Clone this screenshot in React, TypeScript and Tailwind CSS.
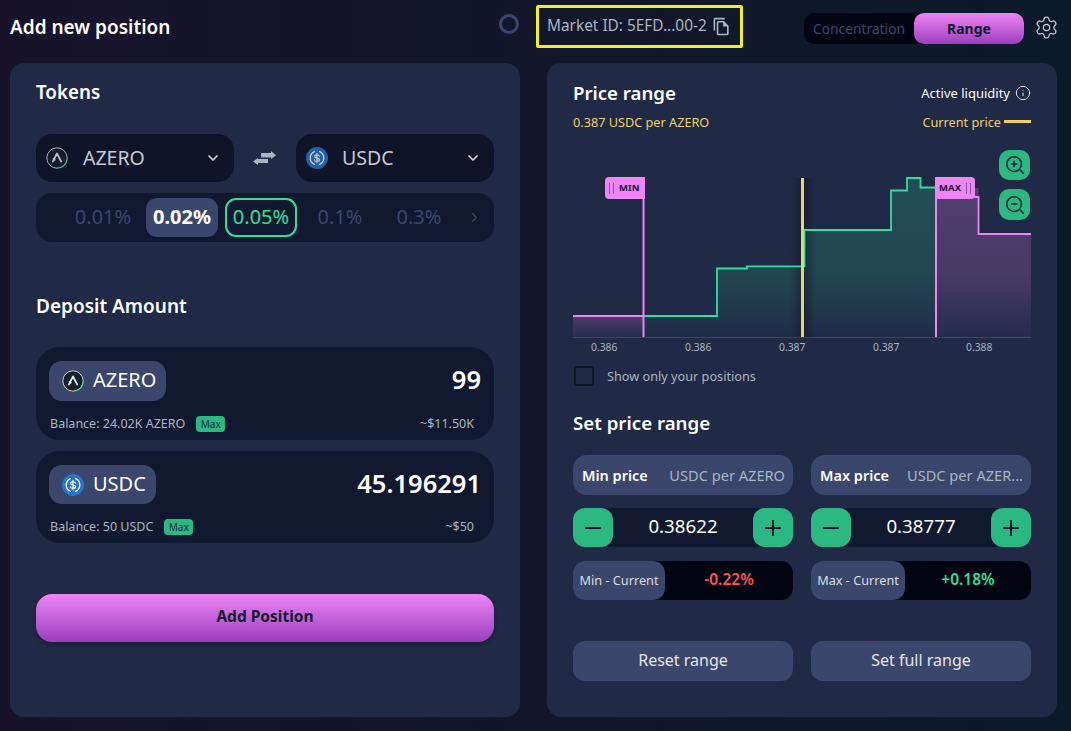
import React from 'react';
import { ChevronDown, ChevronRight, Info, Minus, Plus, Settings, ZoomIn, ZoomOut } from 'lucide-react';
import { MdOutlineFileCopy } from 'react-icons/md';

const FONT = "font-['Noto_Sans',sans-serif]";

function AzeroIcon({ size = 22 }: { size?: number }) {
  return (
    <svg width={size} height={size} viewBox="0 0 22 22" fill="none">
      <circle cx="11" cy="11" r="10.5" fill="#16202b" />
      <circle cx="11" cy="11" r="10.2" stroke="#cfd3d8" strokeWidth="1" />
      <path d="M14 20.8A10.2 10.2 0 0 0 21 12.5" stroke="#2ee09a" strokeWidth="1.2" />
      <path d="M11 6.500 6.800 14.500M11 6.500l4.200 8M8.800 12.800l-1.200-1" stroke="#e8eaec" strokeWidth="1.700" strokeLinecap="round" />
    </svg>
  );
}

function UsdcIcon({ size = 22 }: { size?: number }) {
  return (
    <svg width={size} height={size} viewBox="0 0 22 22" fill="none">
      <circle cx="11" cy="11" r="11" fill="#2775ca" />
      <path d="M8.400 4.600a7 7 0 0 0 0 12.800M13.600 4.600a7 7 0 0 1 0 12.800" stroke="#fff" strokeWidth="1.300" strokeLinecap="round" />
      <path d="M13.400 9.200c-.3-1-1.200-1.500-2.400-1.500-1.300 0-2.300.7-2.300 1.700 0 2.400 4.800 1 4.800 3.300 0 1-1 1.700-2.500 1.700-1.300 0-2.300-.6-2.600-1.600M11 6.300v9.400" stroke="#fff" strokeWidth="1.100" strokeLinecap="round" />
    </svg>
  );
}

function SwapIcon() {
  return (
    <svg width="24" height="16" viewBox="0 0 24 16" fill="#a9b6bf">
      <path d="M8 3h10V1l5 4.300L18 9V7.500H8z" />
      <path d="M15 9H5V8l-5 3.500L5 15v-2h10z" />
    </svg>
  );
}

function TokenSelect({ icon, name, textGap }: { icon: React.ReactNode; name: string; textGap: string }) {
  return (
    <div className="flex h-12 w-[198px] items-center rounded-[16px] bg-[#0f1429] pl-[10px] pr-[13px]">
      <span className="opacity-80">{icon}</span>
      <span className={`text-[19.5px] leading-none text-[#c4cad0] ${textGap}`}>{name}</span>
      <ChevronDown size={16} strokeWidth={2.500} className="ml-auto text-[#d5d9dd]" />
    </div>
  );
}

function FeeTier({ label, state }: { label: string; state?: 'active' | 'best' }) {
  const tone =
    state === 'active'
      ? 'bg-[#3a466b] font-bold text-white'
      : state === 'best'
        ? 'border-2 border-[#2ee09a] text-[#2ee09a]'
        : 'text-[#3a466b]';
  return (
    <div className={`flex h-[39px] w-[72px] items-center justify-center rounded-[11px] pb-[2px] text-[20px] ${tone}`}>
      {label}
    </div>
  );
}

type DepositProps = {
  icon: React.ReactNode;
  token: string;
  pillSize: string;
  amount: string;
  balance: string;
  usd: string;
  height: string;
};

function DepositCard({ icon, token, pillSize, amount, balance, usd, height }: DepositProps) {
  return (
    <div className={`flex flex-col rounded-[24px] bg-[#111931] px-[13px] pt-[14px] ${height}`}>
      <div className="flex items-center justify-between">
        <div className={`flex items-center rounded-[13px] bg-[#3a466b] pl-[13px] ${pillSize}`}>
          {icon}
          <span className="ml-[9px] pb-[2px] text-[20px] leading-none text-white">{token}</span>
        </div>
        <span className="pb-[2px] text-[25.5px] font-semibold leading-none text-white">{amount}</span>
      </div>
      <div className="mt-[15px] flex items-center pr-[7px]">
        <span className="ml-px text-[12.5px] leading-4 text-[#a9b6bf]">{balance}</span>
        <span className="ml-[11px] flex h-4 w-[29px] items-center justify-center rounded-[4px] bg-[#2bb883] text-[10px] font-medium leading-none text-[#0f3a4a]">
          Max
        </span>
        <span className="ml-auto text-[12.5px] leading-4 text-[#a9b6bf]">{usd}</span>
      </div>
    </div>
  );
}

function StepButton({ children }: { children: React.ReactNode }) {
  return (
    <button className="flex h-[39px] w-[40px] items-center justify-center rounded-[12px] bg-[#2bb883] text-[#0f1429]">
      {children}
    </button>
  );
}

type RangeColumnProps = {
  label: string;
  unit: string;
  value: string;
  diffLabel: string;
  diffWidth: string;
  diff: string;
  diffColor: string;
  action: string;
};

function RangeColumn({ label, unit, value, diffLabel, diffWidth, diff, diffColor, action }: RangeColumnProps) {
  return (
    <div className="flex flex-col">
      <div className="flex h-10 items-center justify-between rounded-[14px] bg-[#3a466b] pl-[9px] pr-[8px]">
        <span className="shrink-0 pb-px text-[14.5px] font-semibold leading-5 text-white">{label}</span>
        <span className="whitespace-nowrap pb-px text-[14.6px] leading-5 text-[#a9b6bf]">{unit}</span>
      </div>
      <div className="mt-[13px] flex h-[39px] items-center justify-between rounded-[12px] bg-[#111931]">
        <StepButton>
          <Minus size={24} strokeWidth={2} />
        </StepButton>
        <span className="pb-[2px] text-[18.7px] leading-none text-white">{value}</span>
        <StepButton>
          <Plus size={24} strokeWidth={2} />
        </StepButton>
      </div>
      <div className="mt-[14px] flex h-[39px] items-center rounded-[12px] bg-[#020412]">
        <div className={`flex h-full items-center justify-center rounded-[12px] bg-[#3a466b] text-[12.7px] leading-none text-[#d8dde1] ${diffWidth}`}>
          {diffLabel}
        </div>
        <span className={`flex-1 pb-px text-center text-[15.5px] font-semibold leading-none ${diffColor}`}>{diff}</span>
      </div>
      <button className="mt-[41px] h-10 rounded-[12px] bg-[#3a466b] pb-[2px] text-[16px] leading-none text-[#e4e7ea]">
        {action}
      </button>
    </div>
  );
}

function LiquidityChart() {
  const ticks = ['0.386', '0.386', '0.387', '0.387', '0.388'];
  return (
    <div className="relative mt-[46px]">
      <svg width="458" height="161" viewBox="0 0 458 161" className="block">
        <defs>
          <linearGradient id="greenFill" x1="0" y1="0" x2="0" y2="1">
            <stop offset="0" stopColor="#2ee09a" stopOpacity="0.2" />
            <stop offset="0.6" stopColor="#2ee09a" stopOpacity="0.16" />
            <stop offset="1" stopColor="#2ee09a" stopOpacity="0.02" />
          </linearGradient>
          <linearGradient id="pinkFill" x1="0" y1="0" x2="0" y2="1">
            <stop offset="0" stopColor="#ef84f5" stopOpacity="0.24" />
            <stop offset="0.6" stopColor="#ef84f5" stopOpacity="0.18" />
            <stop offset="1" stopColor="#ef84f5" stopOpacity="0.03" />
          </linearGradient>
          <linearGradient id="pinkFillLow" x1="0" y1="0" x2="0" y2="1">
            <stop offset="0" stopColor="#ef84f5" stopOpacity="0.22" />
            <stop offset="1" stopColor="#ef84f5" stopOpacity="0.03" />
          </linearGradient>
          <linearGradient id="priceShade" x1="0" y1="0" x2="1" y2="0">
            <stop offset="0" stopColor="#0f1429" stopOpacity="0" />
            <stop offset="0.5" stopColor="#0f1429" stopOpacity="0.55" />
            <stop offset="1" stopColor="#0f1429" stopOpacity="0" />
          </linearGradient>
        </defs>
        {/* area under the liquidity steps */}
        <path d="M0 139H70V160H0Z" fill="url(#pinkFillLow)" />
        <path
          d="M70 139H144V91.500H174V89.300H231.500V53H318V13.500H334V1H347.500V10.500H363V160H70Z"
          fill="url(#greenFill)"
        />
        <path d="M363 11H405.500V57H458V160H363Z" fill="url(#pinkFill)" />
        <rect x="217" y="1" width="26" height="159" fill="url(#priceShade)" />
        <path
          d="M70 139H144V91.500H174V89.300H231.500V53H318V13.500H334V1H347.500V10.500H364"
          fill="none"
          stroke="#2ee09a"
          strokeWidth="1.800"
        />
        <path d="M0 139H70" fill="none" stroke="#ef84f5" strokeWidth="1.800" />
        <path d="M363 20H405.500V57H458" fill="none" stroke="#ef84f5" strokeWidth="1.800" />
        <path d="M0 160.500H458" stroke="#3a466b" strokeWidth="1" />
        <path d="M70.500 1V160M363 1V160" stroke="#ef84f5" strokeWidth="2" />
        <rect x="228" y="1" width="3" height="159" fill="#efd063" />
      </svg>
      <div className="absolute left-[32px] top-0 flex h-[22px] w-[40px] items-center gap-[5px] rounded-l-[4px] bg-[#ef84f5] pl-[4px] text-[9.5px] font-bold leading-none text-[#1a1638]">
        <span className="h-[11px] w-[5px] border-x-[1.5px] border-[#8a5a9e]" />
        MIN
      </div>
      <div className="absolute left-[362px] top-0 flex h-[22px] w-[40px] items-center justify-end gap-[5px] rounded-r-[4px] bg-[#ef84f5] pr-[4px] text-[9.5px] font-bold leading-none text-[#1a1638]">
        MAX
        <span className="h-[11px] w-[5px] border-x-[1.5px] border-[#8a5a9e]" />
      </div>
      <div className="absolute right-px top-[-27px] flex flex-col gap-[9px]">
        <button className="flex h-[30px] w-[31px] items-center justify-center rounded-[10px] bg-[#2bb883] text-[#10283a]">
          <ZoomIn size={22} strokeWidth={1.700} />
        </button>
        <button className="flex h-[31px] w-[31px] items-center justify-center rounded-[10px] bg-[#2bb883] text-[#10283a]">
          <ZoomOut size={22} strokeWidth={1.700} />
        </button>
      </div>
      <div className="relative h-[18px] text-[10.3px] leading-[18px] text-[#a9b6bf]">
        <span className="absolute left-[18px]">{ticks[0]}</span>
        <span className="absolute left-[112px]">{ticks[1]}</span>
        <span className="absolute left-[206px]">{ticks[2]}</span>
        <span className="absolute left-[300px]">{ticks[3]}</span>
        <span className="absolute left-[393px]">{ticks[4]}</span>
      </div>
    </div>
  );
}

export default function App() {
  return (
    <div className={`${FONT} h-[731px] w-[1071px] overflow-hidden bg-gradient-to-r from-[#18132b] to-[#0c1a29] px-[10px]`}>
      <header className="flex h-[63px] items-start">
        <h1 className="mt-[14px] text-[19px] font-semibold leading-[26px] text-white">Add new position</h1>
        <span className="ml-auto mt-[14px] h-5 w-5 rounded-full border-[3px] border-[#3a466b]" />
        <div className="ml-[17px] mt-[5px] flex h-[43px] w-[207px] items-center rounded-[2px] border-[3px] border-[#f2f21e] pl-[8px]">
          <span className="whitespace-nowrap pb-px text-[15.4px] leading-5 text-[#a9b6bf]">Market ID: 5EFD...00-2</span>
          <MdOutlineFileCopy size={19} className="ml-[5px] text-[#a9b6bf]" />
        </div>
        <div className="ml-[61px] mt-[13px] flex h-[31px] w-[220px] items-center rounded-[10px] bg-[#020412]">
          <span className="flex-1 text-center text-[13.8px] leading-none text-[#3a466b]">Concentration</span>
          <span className="flex h-full w-[110px] items-center justify-center rounded-[10px] bg-gradient-to-b from-[#ef84f5] to-[#9c3ebd] text-[14px] font-bold leading-none text-[#111931]">
            Range
          </span>
        </div>
        <Settings size={25} strokeWidth={1.200} className="ml-[10px] mr-[2px] mt-[15px] text-[#c4cad0]" />
      </header>

      <main className="flex gap-[27px]">
        <section className="h-[654px] w-[510px] rounded-[14px] bg-[#202946] px-[26px] pt-[16px]">
          <h2 className="text-[18.8px] font-semibold leading-[26px] text-white">Tokens</h2>
          <div className="mt-[29px] flex items-center justify-between">
            <TokenSelect icon={<AzeroIcon />} name="AZERO" textGap="ml-[15px]" />
            <SwapIcon />
            <TokenSelect icon={<UsdcIcon />} name="USDC" textGap="ml-[14px]" />
          </div>
          <div className="mt-[11px] flex h-[49px] items-center gap-[7px] rounded-[16px] bg-[#111931] pl-[31px]">
            <FeeTier label="0.01%" />
            <FeeTier label="0.02%" state="active" />
            <FeeTier label="0.05%" state="best" />
            <FeeTier label="0.1%" />
            <FeeTier label="0.3%" />
            <ChevronRight size={15} className="ml-[5px] text-[#3a466b]" />
          </div>
          <h2 className="mt-[51px] text-[19px] font-semibold leading-[26px] text-white">Deposit Amount</h2>
          <div className="mt-[28px] flex flex-col gap-[11px]">
            <DepositCard
              icon={<AzeroIcon />}
              token="AZERO"
              pillSize="h-10 w-[117px]"
              amount="99"
              balance="Balance: 24.02K AZERO"
              usd="~$11.50K"
              height="h-[93px]"
            />
            <DepositCard
              icon={<UsdcIcon />}
              token="USDC"
              pillSize="h-[39px] w-[107px]"
              amount="45.196291"
              balance="Balance: 50 USDC"
              usd="~$50"
              height="h-[92px]"
            />
          </div>
          <button className="mt-[51px] h-12 w-full rounded-[16px] bg-gradient-to-b from-[#ef84f5] to-[#9c3ebd] pb-[2px] text-[15.5px] font-bold text-[#111931] shadow-[0_2px_4px_rgba(0,0,0,0.3)]">
            Add Position
          </button>
        </section>

        <section className="h-[654px] w-[510px] rounded-[14px] bg-[#202946] px-[26px] pt-[17px]">
          <div className="flex h-[26px] items-center justify-between">
            <h2 className="text-[18.6px] font-semibold leading-[26px] text-white">Price range</h2>
            <div className="flex items-center gap-[5px]">
              <span className="text-[13px] leading-none text-white">Active liquidity</span>
              <Info size={16} strokeWidth={1.300} className="text-white" />
            </div>
          </div>
          <div className="mt-[7px] flex h-[18px] items-center justify-between text-[12.7px] leading-none text-[#efd063]">
            <span>0.387 USDC per AZERO</span>
            <div className="flex items-center gap-[3px]">
              <span>Current price</span>
              <span className="h-[3px] w-[27px] bg-[#efd063]" />
            </div>
          </div>
          <LiquidityChart />
          <div className="mt-[10px] flex items-center">
            <span className="ml-px h-5 w-5 rounded-[3px] border-2 border-[#0f1429]" />
            <span className="ml-[13px] text-[12.7px] leading-none text-[#a9b6bf]">Show only your positions</span>
          </div>
          <h2 className="mt-[24px] text-[18.7px] font-semibold leading-[26px] text-white">Set price range</h2>
          <div className="mt-[19px] grid grid-cols-2 gap-x-[18px]">
            <RangeColumn
              label="Min price"
              unit="USDC per AZERO"
              value="0.38622"
              diffLabel="Min - Current"
              diffWidth="w-[92px]"
              diff="-0.22%"
              diffColor="text-[#fb555f]"
              action="Reset range"
            />
            <RangeColumn
              label="Max price"
              unit="USDC per AZER..."
              value="0.38777"
              diffLabel="Max - Current"
              diffWidth="w-[94px]"
              diff="+0.18%"
              diffColor="text-[#2ee09a]"
              action="Set full range"
            />
          </div>
        </section>
      </main>
    </div>
  );
}
